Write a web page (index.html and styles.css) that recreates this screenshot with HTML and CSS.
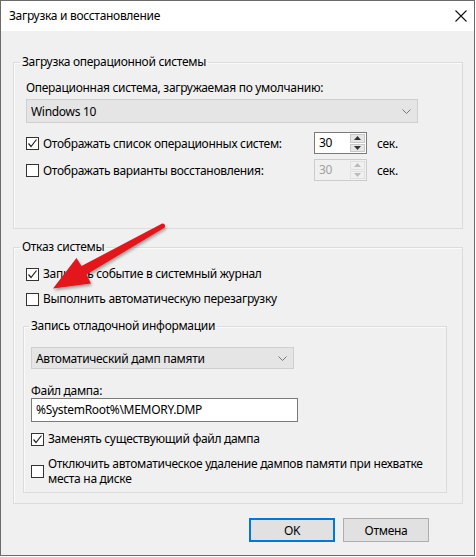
FILE: index.html
```html
<!DOCTYPE html>
<html lang="ru">
<head>
<meta charset="utf-8">
<title>Загрузка и восстановление</title>
<link rel="stylesheet" href="styles.css">
</head>
<body>
<div class="window">
  <div class="titlebar">
    <span class="title">Загрузка и восстановление</span>
    <svg class="close" width="12" height="12" viewBox="0 0 12 12"><path d="M0.5 0.5 L11.5 11.5 M11.5 0.5 L0.5 11.5" stroke="#111" stroke-width="1.1" fill="none"/></svg>
  </div>
  <div class="content">
    <fieldset class="group g1">
      <legend>Загрузка операционной системы</legend>
      <div class="inner">
        <div class="label l1">Операционная система, загружаемая по умолчанию:</div>
        <div class="select s1"><span>Windows 10</span><svg class="chev" width="9" height="5" viewBox="0 0 9 5"><path d="M0.5 0.5 L4.5 4.5 L8.5 0.5" stroke="#777" fill="none"/></svg></div>
        <div class="row r1">
          <span class="cb checked"><svg width="11" height="11" viewBox="0 0 11 11"><path d="M1.5 5.5 L4 8.5 L9.5 1.5" stroke="#222" stroke-width="1.2" fill="none"/></svg></span>
          <span class="rlabel">Отображать список операционных систем:</span>
          <span class="spin"><span class="val">30</span><span class="arrows"><span class="ab"><svg width="7" height="4" viewBox="0 0 7 4"><path d="M0 4 L3.5 0 L7 4Z" fill="#333"/></svg></span><span class="ab"><svg width="7" height="4" viewBox="0 0 7 4"><path d="M0 0 L3.5 4 L7 0Z" fill="#333"/></svg></span></span></span>
          <span class="unit">сек.</span>
        </div>
        <div class="row r2">
          <span class="cb"></span>
          <span class="rlabel">Отображать варианты восстановления:</span>
          <span class="spin disabled"><span class="val">30</span><span class="arrows"><span class="ab"><svg width="7" height="4" viewBox="0 0 7 4"><path d="M0 4 L3.5 0 L7 4Z" fill="#bbb"/></svg></span><span class="ab"><svg width="7" height="4" viewBox="0 0 7 4"><path d="M0 0 L3.5 4 L7 0Z" fill="#bbb"/></svg></span></span></span>
          <span class="unit">сек.</span>
        </div>
      </div>
    </fieldset>

    <fieldset class="group g2">
      <legend>Отказ системы</legend>
      <div class="inner">
        <div class="crow c3">
          <span class="cb checked"><svg width="11" height="11" viewBox="0 0 11 11"><path d="M1.5 5.5 L4 8.5 L9.5 1.5" stroke="#222" stroke-width="1.2" fill="none"/></svg></span>
          <span>Записать событие в системный журнал</span>
        </div>
        <div class="crow c4">
          <span class="cb"></span>
          <span>Выполнить автоматическую перезагрузку</span>
        </div>
        <fieldset class="group g3">
          <legend>Запись отладочной информации</legend>
          <div class="inner">
            <div class="select s2"><span>Автоматический дамп памяти</span><svg class="chev" width="9" height="5" viewBox="0 0 9 5"><path d="M0.5 0.5 L4.5 4.5 L8.5 0.5" stroke="#777" fill="none"/></svg></div>
            <div class="label l2">Файл дампа:</div>
            <div class="textbox">%SystemRoot%\MEMORY.DMP</div>
            <div class="crow c5">
              <span class="cb checked"><svg width="11" height="11" viewBox="0 0 11 11"><path d="M1.5 5.5 L4 8.5 L9.5 1.5" stroke="#222" stroke-width="1.2" fill="none"/></svg></span>
              <span>Заменять существующий файл дампа</span>
            </div>
            <div class="crow c6">
              <span class="cb"></span>
              <span class="multi">Отключить автоматическое удаление дампов памяти при нехватке места на диске</span>
            </div>
          </div>
        </fieldset>
      </div>
    </fieldset>

    <div class="buttons">
      <button class="btn default">OK</button>
      <button class="btn">Отмена</button>
    </div>
  </div>

  <svg class="arrow" width="476" height="557" viewBox="0 0 476 557">
    <defs>
      <filter id="sh" x="-20%" y="-20%" width="140%" height="140%">
        <feDropShadow dx="1" dy="2" stdDeviation="1.5" flood-color="#000" flood-opacity="0.35"/>
      </filter>
    </defs>
    <path filter="url(#sh)" fill="#e3151b" d="M162.2 223.6 C164.5 223.2 166 226 164.4 227.8 L86.5 274.5 L91 283.5 L53 288.5 L76.5 258 L81.5 266 Z"/>
  </svg>
</div>
</body>
</html>
```

FILE: styles.css
```css
* { box-sizing: border-box; }
html, body { margin: 0; padding: 0; background: #ffffff; }
body {
  font-family: "Noto Sans", "Segoe UI", sans-serif;
  font-size: 12px;
  letter-spacing: -0.3px;
  color: #000;
  width: 476px;
  height: 557px;
  overflow: hidden;
}
.window {
  position: relative;
  width: 475px;
  height: 556px;
  border: 1px solid #6b6b6b;
  background: #f0f0f0;
  display: flex;
  flex-direction: column;
}
.titlebar {
  height: 30px;
  background: #ffffff;
  display: flex;
  align-items: center;
  justify-content: space-between;
  padding: 0 7px 0 8px;
  flex: none;
}
.title { font-size: 12px; line-height: 16px; }
.close { display: block; }
.content {
  flex: 1;
  padding: 23px 11px 0 12px;
  display: flex;
  flex-direction: column;
}
.group {
  margin: 0;
  padding: 0;
  border: 1px solid #dcdcdc;
  box-shadow: inset 1px 1px 0 #fafafa;
  min-width: 0;
}
.group legend {
  padding: 0 2px;
  margin-left: 6px;
  line-height: 16px;
  font-size: 12px;
}
.g1 .inner { padding: 10px 0 47px 12px; }
.label { line-height: 16px; }
.select {
  margin-top: 3px;
  height: 24px;
  background: #e5e5e5;
  border: 1px solid #cfcfcf;
  display: flex;
  align-items: center;
  justify-content: space-between;
  padding: 0 6px 0 4px;
}
.s1 { width: 392px; }
.row {
  display: flex;
  align-items: center;
  height: 22px;
}
.r1 { margin-top: 9px; }
.r2 { margin-top: 5px; }
.cb {
  width: 13px;
  height: 13px;
  border: 1px solid #333;
  background: #fff;
  flex: none;
  display: inline-flex;
  align-items: center;
  justify-content: center;
}
.cb svg { display: block; }
.rlabel { width: 271px; margin-left: 4px; }
.spin {
  width: 53px;
  height: 22px;
  border: 1px solid #7a7a7a;
  background: #fff;
  display: flex;
  align-items: stretch;
}
.spin .val { flex: 1; padding-left: 4px; line-height: 20px; }
.spin .arrows {
  width: 17px;
  display: flex;
  flex-direction: column;
  padding: 1px;
  gap: 1px;
}
.spin .ab {
  flex: 1;
  background: #e6e6e6;
  border: 1px solid #c8c8c8;
  display: flex;
  align-items: center;
  justify-content: center;
}
.spin.disabled { border-color: #cccccc; background: #f0f0f0; color: #a0a0a0; }
.spin.disabled .ab { background: #f0f0f0; border-color: #e0e0e0; }
.unit { margin-left: 10px; }

.g2 { margin-top: 10px; }
.g2 > .inner { padding: 11px 15px 10px 12px; }
.crow {
  display: flex;
  align-items: center;
  gap: 4px;
  line-height: 16px;
}
.c4 { margin-top: 9px; }
.g3 { margin: 11px 0 0 -3px; }
.g3 legend { margin-left: 5px; }
.g3 .inner { padding: 13px 0 6px 7px; }
.s2 { width: 263px; height: 22px; margin-top: 0; }
.l2 { margin-top: 15px; line-height: 14px; }
.textbox {
  width: 267px;
  height: 24px;
  background: #fff;
  border: 1px solid #7a7a7a;
  line-height: 22px;
  padding-left: 4px;
}
.c5 { margin-top: 9px; }
.c6 { margin-top: 9px; }
.multi { line-height: 15px; width: 395px; }

.buttons {
  display: flex;
  justify-content: flex-end;
  gap: 8px;
  padding-right: 34px;
  margin-top: 14px;
}
.btn {
  width: 86px;
  height: 24px;
  font-family: inherit;
  font-size: 12px;
  letter-spacing: inherit;
  background: #e1e1e1;
  border: 1px solid #adadad;
  padding: 0;
  color: #000;
}
.btn.default { border: 2px solid #0078d7; }

.arrow {
  position: absolute;
  left: -1px;
  top: -1px;
  pointer-events: none;
}
```
